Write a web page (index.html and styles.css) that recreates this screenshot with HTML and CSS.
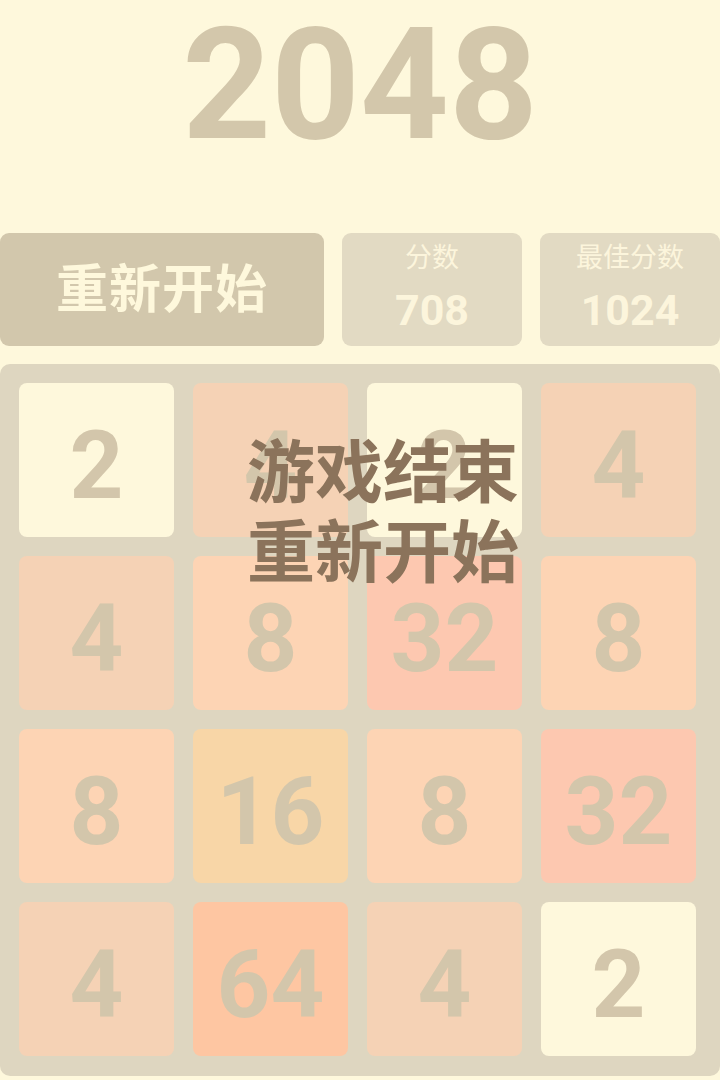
FILE: index.html
```html
<!DOCTYPE html>
<html lang="zh-CN">
<head>
    <meta charset="UTF-8">
    <meta name="viewport" content="width=device-width, initial-scale=1.0">
    <title>2048</title>
    <link rel="stylesheet" href="styles.css">
</head>
<body>
    <div class="header">
        <h1 class="title">2048</h1>
    </div>

    <div class="top-bar">
        <button class="restart-btn">重新开始</button>
        <div class="score-box">
            <div class="score-label">分数</div>
            <div class="score-value">708</div>
        </div>
        <div class="score-box">
            <div class="score-label">最佳分数</div>
            <div class="score-value">1024</div>
        </div>
    </div>

    <div class="board">
        <div class="grid">
            <div class="tile tile-2">2</div>
            <div class="tile tile-4">4</div>
            <div class="tile tile-2">2</div>
            <div class="tile tile-4">4</div>

            <div class="tile tile-4">4</div>
            <div class="tile tile-8">8</div>
            <div class="tile tile-32">32</div>
            <div class="tile tile-8">8</div>

            <div class="tile tile-8">8</div>
            <div class="tile tile-16">16</div>
            <div class="tile tile-8">8</div>
            <div class="tile tile-32">32</div>

            <div class="tile tile-4">4</div>
            <div class="tile tile-64">64</div>
            <div class="tile tile-4">4</div>
            <div class="tile tile-2">2</div>
        </div>

        <!-- game over message, shown over the board -->
        <div class="game-over">
            <p>游戏结束</p>
            <p>重新开始</p>
        </div>
    </div>
</body>
</html>
```

FILE: styles.css
```css
* {
    margin: 0;
    padding: 0;
    box-sizing: border-box;
}

html, body {
    overflow: hidden;
}

body {
    font-family: Roboto, "Noto Sans CJK SC", sans-serif;
    background: #fef8dc;
    width: 720px;
    height: 1080px;
}

.header {
    height: 233px;
}

.title {
    text-align: center;
    font-family: Roboto, sans-serif;
    font-weight: 700;
    font-size: 155px;
    line-height: 170px;
    color: #d3c7ab;
}

.top-bar {
    display: flex;
    gap: 18px;
    height: 113px;
}

.restart-btn {
    width: 325px;
    padding-bottom: 8px;
    border: none;
    border-radius: 9px;
    background: #d2c7ac;
    color: #fef8dc;
    font-family: "Noto Sans CJK SC", sans-serif;
    font-weight: 700;
    font-size: 52px;
    letter-spacing: 1px;
    cursor: pointer;
}

.score-box {
    width: 180px;
    flex-shrink: 0;
    border-radius: 9px;
    background: #e2dac3;
    display: flex;
    flex-direction: column;
    align-items: center;
    padding-top: 10px;
    color: #fcf5dc;
}

.score-label {
    font-family: "Noto Sans CJK SC", sans-serif;
    font-size: 27px;
    line-height: 26px;
}

.score-value {
    margin-top: 20px;
    font-family: Roboto, sans-serif;
    font-weight: 700;
    font-size: 43px;
    line-height: 1;
}

.board {
    position: relative;
    margin-top: 18px;
    height: 712px;
    padding: 19px;
    border-radius: 10px;
    background: #ded6c0;
}

.grid {
    display: grid;
    grid-template-columns: repeat(4, 155px);
    grid-auto-rows: 154px;
    column-gap: 19px;
    row-gap: 19px;
}

.tile {
    border-radius: 8px;
    display: flex;
    justify-content: center;
    align-items: center;
    padding-top: 12px;
    font-family: Roboto, sans-serif;
    font-weight: 700;
    font-size: 94px;
    color: #d3c6ab;
}

.tile-2 { background: #fef8dc; }
.tile-4 { background: #f5d2b5; }
.tile-8 { background: #fdd4b4; }
.tile-16 { background: #f8d6a7; }
.tile-32 { background: #fdc8b0; }
.tile-64 { background: #fec6a2; }

.game-over {
    position: absolute;
    top: 64px;
    left: 0;
    right: 0;
    padding-left: 46px;
    text-align: center;
    font-family: "Noto Sans CJK SC", sans-serif;
    font-weight: 700;
    font-size: 68px;
    line-height: 80px;
    color: #8b735b;
}
```
